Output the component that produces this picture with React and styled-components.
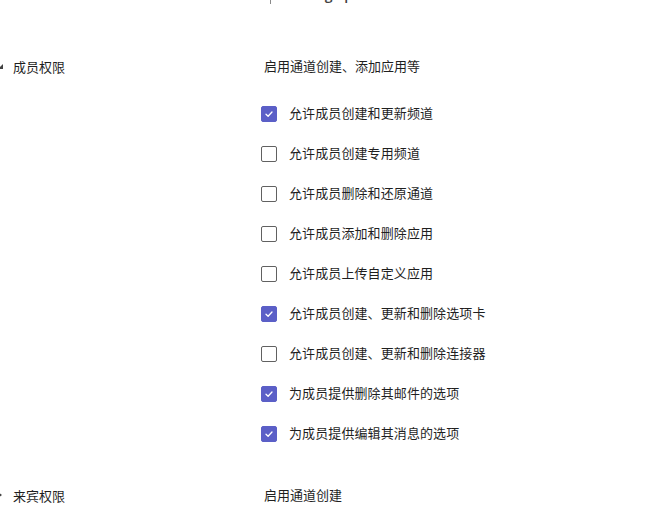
import React from "react";
import styled, { createGlobalStyle } from "styled-components";

const GlobalStyle = createGlobalStyle`
  html, body {
    margin: 0;
    padding: 0;
    background: #ffffff;
  }
  body {
    font-family: "Noto Sans", "Noto Sans CJK SC", sans-serif;
    color: #1f1f1f;
    overflow: hidden;
  }
`;

const memberOptions = [
  { label: "允许成员创建和更新频道", checked: true },
  { label: "允许成员创建专用频道", checked: false },
  { label: "允许成员删除和还原通道", checked: false },
  { label: "允许成员添加和删除应用", checked: false },
  { label: "允许成员上传自定义应用", checked: false },
  { label: "允许成员创建、更新和删除选项卡", checked: true },
  { label: "允许成员创建、更新和删除连接器", checked: false },
  { label: "为成员提供删除其邮件的选项", checked: true },
  { label: "为成员提供编辑其消息的选项", checked: true },
];

const Page = styled.div`
  display: flex;
  flex-direction: column;
  width: 671px;
  height: 521px;
  overflow: hidden;
`;

const PictureBar = styled.div`
  display: flex;
  align-items: center;
  gap: 19px;
  height: 20px;
  margin-top: -16px;
  padding-left: 270px;
`;

const Divider = styled.span`
  width: 1px;
  height: 20px;
  background: #8a8a8a;
`;

const PictureLink = styled.span`
  font-family: "Open Sans", "Noto Sans", sans-serif;
  font-size: 14px;
  font-weight: 600;
  color: #424242;
`;

const Section = styled.section`
  display: grid;
  grid-template-columns: 264px 1fr;
  margin-top: ${(p) => p.$top}px;
`;

const SectionTitle = styled.div`
  display: flex;
  align-items: center;
  gap: 9px;
  height: 20px;
  font-family: "Noto Sans CJK SC", sans-serif;
  font-size: 13px;
`;

const Caret = styled.svg`
  width: 8px;
  height: 8px;
  margin-left: -4px;
  flex: none;
`;

const Column = styled.div`
  display: flex;
  flex-direction: column;
`;

const Summary = styled.div`
  height: 20px;
  line-height: 20px;
  font-family: "Noto Sans CJK SC", sans-serif;
  font-size: 13px;
`;

const OptionList = styled.ul`
  list-style: none;
  margin: 16px 0 0;
  padding: 0;
`;

const OptionRow = styled.li`
  display: flex;
  align-items: center;
  gap: 12px;
  height: 40px;
  margin-left: -3px;
  font-family: "Noto Sans CJK SC", sans-serif;
  font-size: 13px;
  letter-spacing: 0.1px;
`;

const Box = styled.span`
  display: flex;
  align-items: center;
  justify-content: center;
  width: 16px;
  height: 16px;
  margin-top: 3px;
  box-sizing: border-box;
  border-radius: 2px;
  border: 1px solid ${(p) => (p.$checked ? "#5b5fc7" : "#616161")};
  background: ${(p) => (p.$checked ? "#5b5fc7" : "#ffffff")};
  flex: none;
`;

const Check = () => (
  <svg width="10" height="10" viewBox="0 0 10 10">
    <path
      d="M2 5.2 L4.1 7.2 L8 3"
      fill="none"
      stroke="#ffffff"
      strokeWidth="1.3"
      strokeLinecap="round"
      strokeLinejoin="round"
    />
  </svg>
);

const Checkbox = ({ checked, label }) => (
  <OptionRow>
    <Box $checked={checked}>{checked && <Check />}</Box>
    <span>{label}</span>
  </OptionRow>
);

const SectionHeading = ({ open, children }) => (
  <SectionTitle>
    <Caret viewBox="0 0 8 8">
      {open ? (
        <path d="M7 2 L7 7 L2 7 Z" fill="#424242" />
      ) : (
        <path d="M2 1 L6 4 L2 7 Z" fill="#424242" />
      )}
    </Caret>
    <span>{children}</span>
  </SectionTitle>
);

const App = () => {
  return (
    <>
      <GlobalStyle />
      <Page>
        <PictureBar>
          <Divider />
          <PictureLink>Change picture</PictureLink>
        </PictureBar>
        <Section $top={52}>
          <SectionHeading open>成员权限</SectionHeading>
          <Column>
            <Summary>启用通道创建、添加应用等</Summary>
            <OptionList>
              {memberOptions.map((o) => (
                <Checkbox key={o.label} checked={o.checked} label={o.label} />
              ))}
            </OptionList>
          </Column>
        </Section>
        <Section $top={33}>
          <SectionHeading>来宾权限</SectionHeading>
          <Column>
            <Summary>启用通道创建</Summary>
          </Column>
        </Section>
      </Page>
    </>
  );
};

export default App;
